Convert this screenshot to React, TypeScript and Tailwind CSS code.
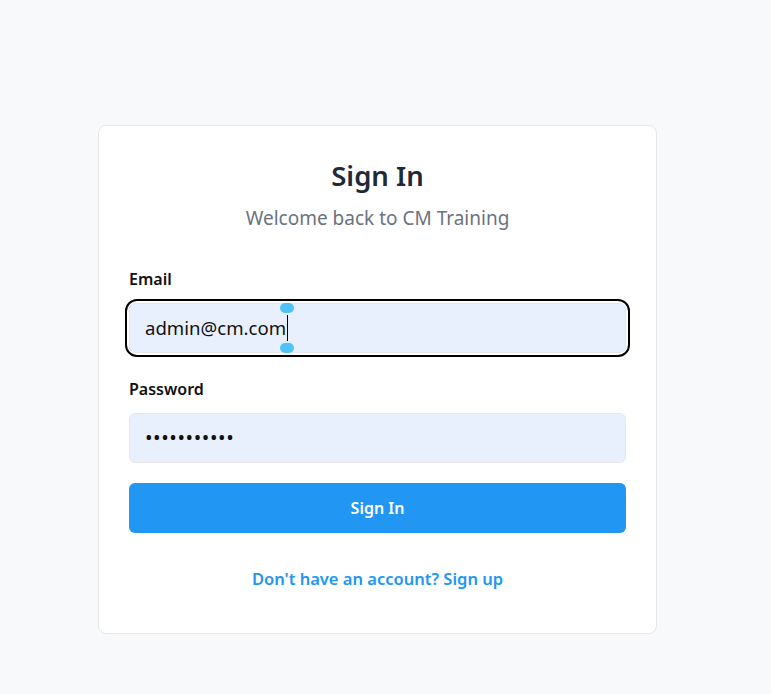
export default function App() {
  return (
    <div
      className="min-h-screen w-full bg-[#f8f9fb]"
      style={{ fontFamily: '"Noto Sans", "Open Sans", sans-serif' }}
    >
      <div className="flex w-[755px] justify-center pt-[125px] pb-[60px]">
        {/* Card */}
        <div className="w-[559px] rounded-lg border border-[#e5e7eb] bg-white px-[30px] pt-[30px] pb-[42px]">
          <h1 className="text-center text-[27.5px] leading-[40px] font-semibold text-[#1f2937]">Sign In</h1>
          <p className="mt-[8px] text-center text-[19px] leading-[28px] text-[#6b7280]">
            Welcome back to CM Training
          </p>

          <div className="mt-[35px]">
            <label className="block text-[16px] leading-[24px] font-semibold text-[#111]">Email</label>
            <div className="mt-[12px] rounded-[8px] outline-2 outline-offset-[2px] outline-black">
              <div className="relative flex h-[50px] items-center rounded-[6px] border border-[#e5e7eb] bg-[#e8f0fe] px-[15px] text-[18.6px] text-[#111]">
                <span>admin@cm.com</span>
                <span className="ml-[1px] h-[26px] w-px bg-black" />
                <span className="absolute left-[150px] top-[-1px] h-[10px] w-[14px] rounded-full bg-[#4fc3f7]" />
                <span className="absolute left-[150px] bottom-[-1px] h-[10px] w-[14px] rounded-full bg-[#4fc3f7]" />
              </div>
            </div>
          </div>

          <div className="mt-[24px]">
            <label className="block text-[16px] leading-[24px] font-semibold text-[#111]">Password</label>
            <div className="mt-[12px] flex h-[50px] items-center rounded-[6px] border border-[#e5e7eb] bg-[#e8f0fe] px-[15px] text-[20px] text-[#111]">
              <span className="tracking-[0.6px]">•••••••••••</span>
            </div>
          </div>

          <button className="mt-[20px] flex h-[50px] w-full items-center justify-center rounded-[6px] bg-[#2196f3] text-[16px] font-semibold text-white">
            Sign In
          </button>

          <p className="mt-[34px] text-center text-[16.5px] leading-[24px] font-semibold text-[#2196f3]">
            Don't have an account? Sign up
          </p>
        </div>
      </div>
    </div>
  );
}
